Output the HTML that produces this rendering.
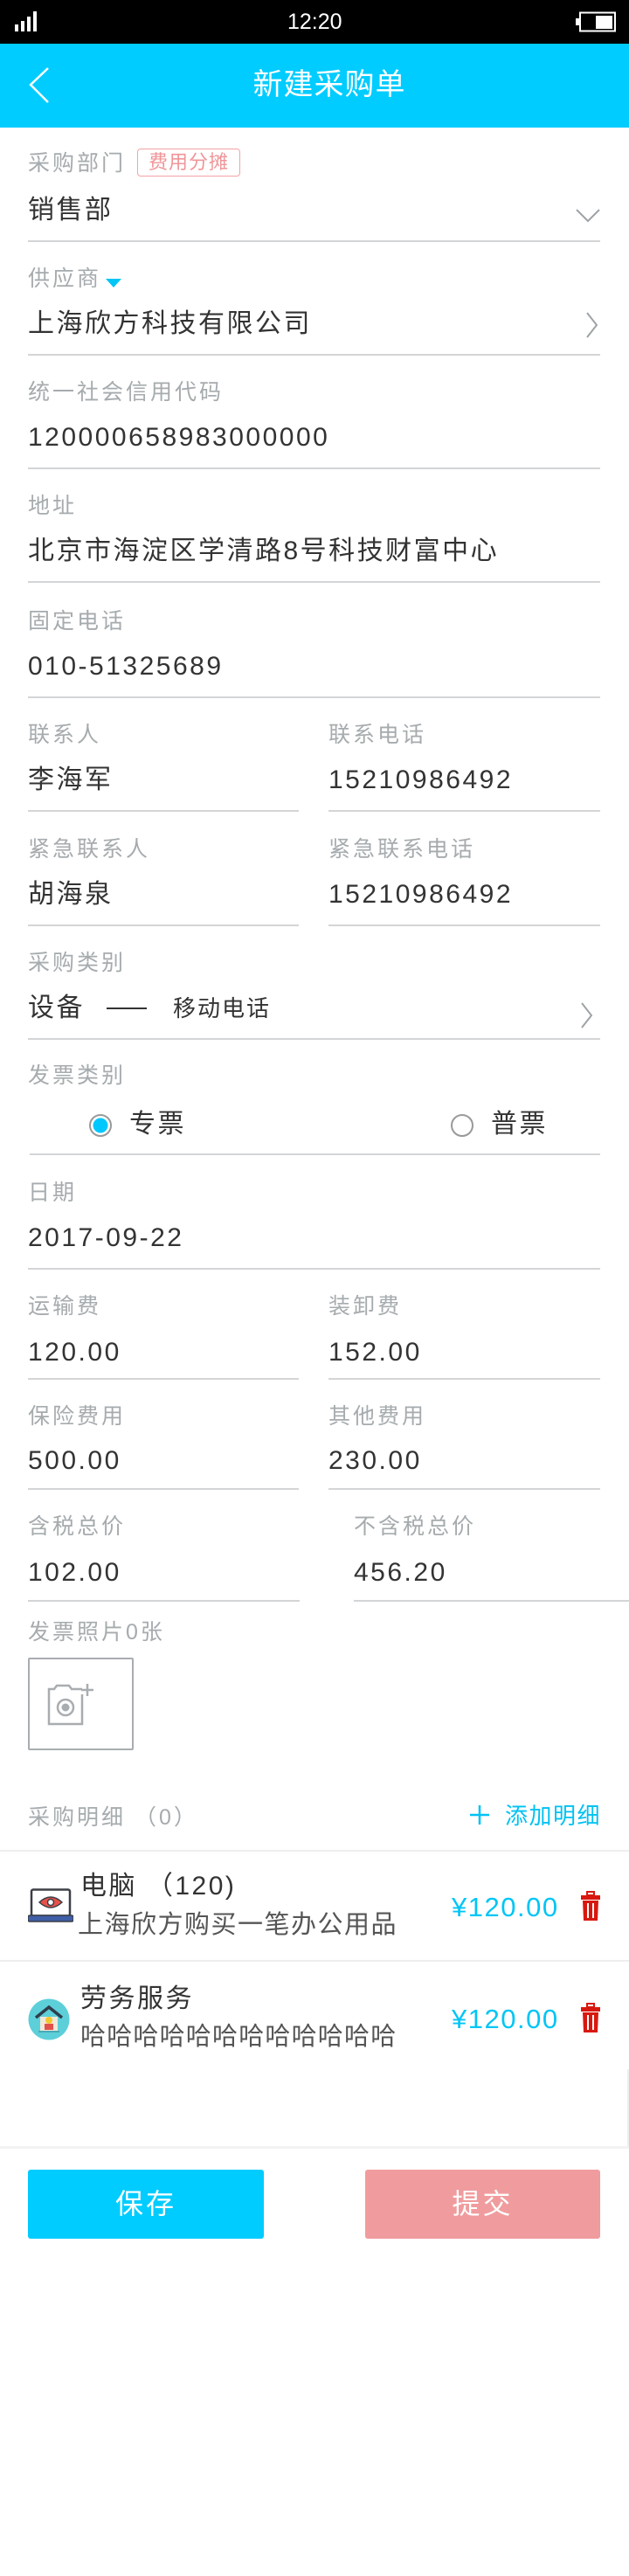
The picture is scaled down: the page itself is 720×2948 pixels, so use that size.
<!DOCTYPE html>
<html><head><meta charset="utf-8"><style>
*{margin:0;padding:0;box-sizing:border-box}
body{width:720px;height:2948px;background:#fff;position:relative;overflow:hidden;font-family:"Liberation Sans","Noto Sans CJK SC",sans-serif}
.a{position:absolute;white-space:nowrap;line-height:1}
.lb{font-size:25px;color:#a6abae;letter-spacing:3px}
.v{font-size:30px;color:#333;letter-spacing:2.5px}
.ln{position:absolute;height:2px;background:#d3d5d7}
</style></head><body>
<div class="a" style="left:0;top:0;width:720px;height:50px;background:#000"></div>
<svg class="a" style="left:16px;top:12px" width="34" height="26"><rect x="1" y="16" width="4" height="8" fill="#fff"/><rect x="8" y="12" width="4" height="12" fill="#fff"/><rect x="15" y="7" width="4" height="17" fill="#fff"/><rect x="22" y="1" width="4" height="23" fill="#fff"/></svg>
<div class="a" style="left:329px;top:13px;color:#fff;font-size:25px">12:20</div>
<svg class="a" style="left:658px;top:13px" width="48" height="24"><rect x="6" y="1.5" width="40" height="21" fill="none" stroke="#fff" stroke-width="2"/><rect x="1" y="8" width="4" height="8" fill="#fff"/><rect x="24" y="5" width="19" height="15" fill="#fff"/></svg>
<div class="a" style="left:0;top:50px;width:720px;height:96px;background:#00ccff"></div>
<svg class="a" style="left:30px;top:76px" width="30" height="44"><path d="M25 2 L5 21 L25 41" fill="none" stroke="#fff" stroke-width="2.5"/></svg>
<div class="a" style="left:277px;width:200px;text-align:center;top:80px;color:#fff;font-size:34px;letter-spacing:1px">新建采购单</div>

<div class="a lb" style="left:32px;top:175px">采购部门</div>
<div class="a" style="left:157px;top:170px;width:118px;height:32px;border:1.5px solid #f2a3a5;border-radius:4px;color:#f09598;font-size:22px;text-align:center;line-height:29px;letter-spacing:1px">费用分摊</div>
<div class="a v" style="left:32px;top:226px">销售部</div>
<svg class="a" style="left:658px;top:237px" width="30" height="20"><path d="M2 3 L15 16 L28 3" fill="none" stroke="#9ea3a6" stroke-width="2"/></svg>
<div class="ln" style="left:32px;width:655px;top:275px"></div>

<div class="a lb" style="left:32px;top:307px">供应商</div>
<svg class="a" style="left:120px;top:318px" width="20" height="12"><path d="M1 1 H19 L10 11 Z" fill="#00c5f5"/></svg>
<div class="a v" style="left:32px;top:356px">上海欣方科技有限公司</div>
<svg class="a" style="left:668px;top:356px" width="20" height="32"><path d="M4 2 L15 16 L4 30" fill="none" stroke="#9ea3a6" stroke-width="2"/></svg>
<div class="ln" style="left:32px;width:655px;top:405px"></div>

<div class="a lb" style="left:32px;top:437px">统一社会信用代码</div>
<div class="a v" style="left:32px;top:486px">120000658983000000</div>
<div class="ln" style="left:32px;width:655px;top:535px"></div>

<div class="a lb" style="left:32px;top:567px">地址</div>
<div class="a v" style="left:32px;top:616px">北京市海淀区学清路8号科技财富中心</div>
<div class="ln" style="left:32px;width:655px;top:665px"></div>

<div class="a lb" style="left:32px;top:699px">固定电话</div>
<div class="a v" style="left:32px;top:748px">010-51325689</div>
<div class="ln" style="left:32px;width:655px;top:797px"></div>

<div class="a lb" style="left:32px;top:829px">联系人</div>
<div class="a lb" style="left:376px;top:829px">联系电话</div>
<div class="a v" style="left:32px;top:878px">李海军</div>
<div class="a v" style="left:376px;top:878px">15210986492</div>
<div class="ln" style="left:32px;width:310px;top:927px"></div>
<div class="ln" style="left:376px;width:311px;top:927px"></div>

<div class="a lb" style="left:32px;top:960px">紧急联系人</div>
<div class="a lb" style="left:376px;top:960px">紧急联系电话</div>
<div class="a v" style="left:32px;top:1009px">胡海泉</div>
<div class="a v" style="left:376px;top:1009px">15210986492</div>
<div class="ln" style="left:32px;width:310px;top:1058px"></div>
<div class="ln" style="left:376px;width:311px;top:1058px"></div>

<div class="a lb" style="left:32px;top:1090px">采购类别</div>
<div class="a v" style="left:32px;top:1139px">设备</div>
<div class="a" style="left:122px;top:1153px;width:46px;height:2px;background:#333"></div>
<div class="a" style="left:198px;top:1141px;font-size:26px;color:#333;letter-spacing:2px">移动电话</div>
<svg class="a" style="left:662px;top:1146px" width="20" height="32"><path d="M4 2 L15 16 L4 30" fill="none" stroke="#9ea3a6" stroke-width="2"/></svg>
<div class="ln" style="left:32px;width:655px;top:1188px"></div>

<div class="a lb" style="left:32px;top:1219px">发票类别</div>
<svg class="a" style="left:100px;top:1273px" width="30" height="30"><circle cx="15" cy="15" r="12" fill="#fff" stroke="#999" stroke-width="2"/><circle cx="15" cy="15" r="8.5" fill="#00c8ff"/></svg>
<div class="a v" style="left:148px;top:1272px">专票</div>
<svg class="a" style="left:514px;top:1273px" width="30" height="30"><circle cx="15" cy="15" r="12" fill="#fff" stroke="#999" stroke-width="2"/></svg>
<div class="a v" style="left:562px;top:1272px">普票</div>
<div class="ln" style="left:34px;width:653px;top:1320px"></div>

<div class="a lb" style="left:32px;top:1353px">日期</div>
<div class="a v" style="left:32px;top:1402px">2017-09-22</div>
<div class="ln" style="left:32px;width:655px;top:1451px"></div>

<div class="a lb" style="left:32px;top:1483px">运输费</div>
<div class="a lb" style="left:376px;top:1483px">装卸费</div>
<div class="a v" style="left:32px;top:1533px">120.00</div>
<div class="a v" style="left:376px;top:1533px">152.00</div>
<div class="ln" style="left:32px;width:310px;top:1577px"></div>
<div class="ln" style="left:376px;width:311px;top:1577px"></div>

<div class="a lb" style="left:32px;top:1609px">保险费用</div>
<div class="a lb" style="left:376px;top:1609px">其他费用</div>
<div class="a v" style="left:32px;top:1657px">500.00</div>
<div class="a v" style="left:376px;top:1657px">230.00</div>
<div class="ln" style="left:32px;width:310px;top:1703px"></div>
<div class="ln" style="left:376px;width:311px;top:1703px"></div>

<div class="a lb" style="left:32px;top:1735px">含税总价</div>
<div class="a lb" style="left:405px;top:1735px">不含税总价</div>
<div class="a v" style="left:32px;top:1785px">102.00</div>
<div class="a v" style="left:405px;top:1785px">456.20</div>
<div class="ln" style="left:32px;width:311px;top:1831px"></div>
<div class="ln" style="left:405px;width:315px;top:1831px"></div>

<div class="a lb" style="left:32px;top:1856px">发票照片0张</div>
<div class="a" style="left:32px;top:1897px;width:121px;height:106px;border:2px solid #a9adb0;border-radius:2px"></div>
<svg class="a" style="left:54px;top:1927px" width="66" height="50"><path d="M40 6 H28 L25 2 H11 L8 6 H2 V46 H40 V12" fill="none" stroke="#a9adb0" stroke-width="2.5"/><circle cx="21" cy="27" r="9" fill="none" stroke="#a9adb0" stroke-width="2.5"/><circle cx="21" cy="27" r="4.5" fill="#a9adb0"/><path d="M46 0 V14 M39 7 H53" stroke="#a9adb0" stroke-width="2.5"/></svg>

<div class="a lb" style="left:32px;top:2068px">采购明细 （0）</div>
<svg class="a" style="left:537px;top:2065px" width="24" height="24"><path d="M12 1 V23 M1 12 H23" stroke="#00c2f2" stroke-width="2.5"/></svg>
<div class="a" style="left:578px;top:2065px;font-size:26px;color:#00c2f2;letter-spacing:1.5px">添加明细</div>
<div class="a" style="left:0;top:2117px;width:720px;height:2px;background:#eee"></div>

<svg class="a" style="left:32px;top:2161px" width="52" height="40"><rect x="4" y="1.5" width="44" height="30" rx="2" fill="#fff" stroke="#3b3f46" stroke-width="2.5"/><path d="M13 16 Q26 4 39 16 Q26 28 13 16 Z" fill="#e8504a" stroke="#3b3f46" stroke-width="1.5"/><circle cx="26" cy="16" r="3.5" fill="#fff" stroke="#3b3f46" stroke-width="1.5"/><rect x="0" y="31" width="52" height="7" rx="2" fill="#3f5ea8" stroke="#3b3f46" stroke-width="1.5"/></svg>
<div class="a v" style="left:92px;top:2144px">电脑 （120)</div>
<div class="a" style="left:89px;top:2189px;font-size:29px;color:#555;letter-spacing:1.5px">上海欣方购买一笔办公用品</div>
<div class="a" style="left:517px;top:2167px;font-size:31px;color:#00c5f5;letter-spacing:1.5px">¥120.00</div>
<svg class="a" style="left:664px;top:2164px" width="24" height="36"><rect x="8" y="1" width="8" height="4" fill="none" stroke="#d8180f" stroke-width="2"/><rect x="1" y="5" width="22" height="5" fill="#d8180f"/><path d="M3 11 H21 L20 34 H4 Z" fill="#d8180f"/><path d="M9 14 V31 M15 14 V31" stroke="#fff" stroke-width="2"/></svg>
<div class="a" style="left:0;top:2243px;width:720px;height:2px;background:#eee"></div>

<svg class="a" style="left:32px;top:2287px" width="48" height="48"><circle cx="24" cy="24" r="23.5" fill="#5dcfd9"/><path d="M9 22 L24 10 L39 22" fill="none" stroke="#2e3d4c" stroke-width="3.5"/><rect x="14" y="21" width="20" height="16" fill="#f1e7d8"/><circle cx="24" cy="25" r="4" fill="#f5c72e"/><rect x="19" y="29" width="10" height="7" fill="#e2504c"/><rect x="12" y="37" width="24" height="2" fill="#48a9b7"/></svg>
<div class="a v" style="left:92px;top:2273px">劳务服务</div>
<div class="a" style="left:92px;top:2317px;font-size:29px;color:#555;letter-spacing:1.2px">哈哈哈哈哈哈哈哈哈哈哈哈</div>
<div class="a" style="left:517px;top:2295px;font-size:31px;color:#00c5f5;letter-spacing:1.5px">¥120.00</div>
<svg class="a" style="left:664px;top:2292px" width="24" height="36"><rect x="8" y="1" width="8" height="4" fill="none" stroke="#d8180f" stroke-width="2"/><rect x="1" y="5" width="22" height="5" fill="#d8180f"/><path d="M3 11 H21 L20 34 H4 Z" fill="#d8180f"/><path d="M9 14 V31 M15 14 V31" stroke="#fff" stroke-width="2"/></svg>
<div class="a" style="left:718px;top:2368px;width:2px;height:90px;background:#eee"></div>
<div class="a" style="left:0;top:2456px;width:720px;height:3px;background:#f3f3f3"></div>

<div class="a" style="left:32px;top:2483px;width:270px;height:79px;background:#00ccff;border-radius:3px;color:#fff;font-size:32px;text-align:center;line-height:79px;letter-spacing:3px">保存</div>
<div class="a" style="left:418px;top:2483px;width:269px;height:79px;background:#f09c9e;border-radius:3px;color:#fff;font-size:32px;text-align:center;line-height:79px;letter-spacing:3px">提交</div>
</body></html>
